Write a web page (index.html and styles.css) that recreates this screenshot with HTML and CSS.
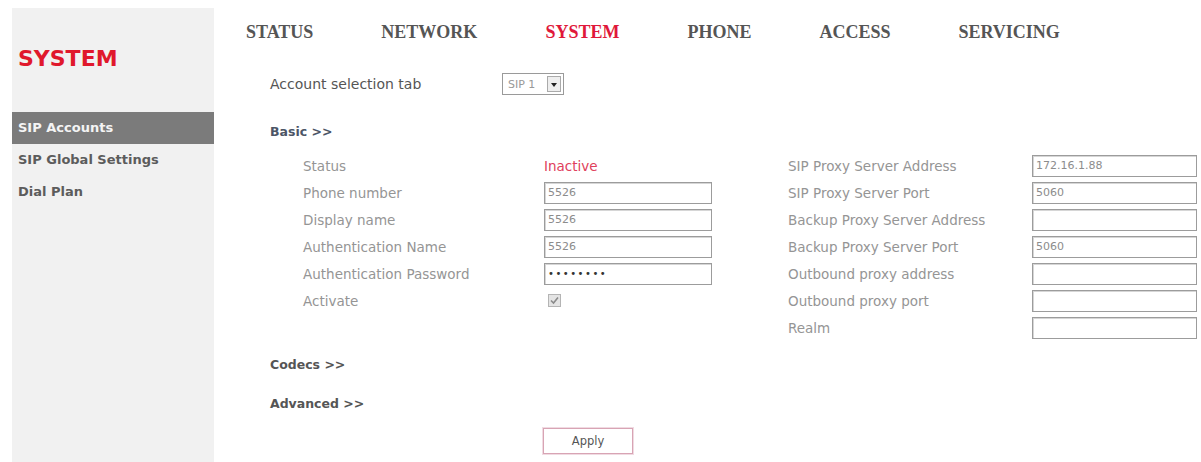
FILE: index.html
```html
<!DOCTYPE html>
<html lang="en">
<head>
	<meta charset="UTF-8">
	<meta name="viewport" content="width=device-width, initial-scale=1.0">
	<title>SIP Accounts</title>
	<link rel="stylesheet" href="styles.css">
</head>
<body>
	<div class="page">
		<div class="sidebar">
			<h1 class="brand">SYSTEM</h1>
			<ul class="side-menu">
				<li class="side-item selected"><a href="#" class="side-link">SIP Accounts</a></li>
				<li class="side-item"><a href="#" class="side-link">SIP Global Settings</a></li>
				<li class="side-item"><a href="#" class="side-link">Dial Plan</a></li>
			</ul>
		</div>

		<div class="main">
			<ul class="top-menu">
				<li class="top-item"><a href="#" class="top-link">STATUS</a></li>
				<li class="top-item"><a href="#" class="top-link">NETWORK</a></li>
				<li class="top-item selected"><a href="#" class="top-link">SYSTEM</a></li>
				<li class="top-item"><a href="#" class="top-link">PHONE</a></li>
				<li class="top-item"><a href="#" class="top-link">ACCESS</a></li>
				<li class="top-item"><a href="#" class="top-link">SERVICING</a></li>
			</ul>

			<div class="content">
				<div class="account-row">
					<span class="account-label">Account selection tab</span>
					<span class="fake-select">
						<span class="select-value">SIP 1</span>
						<span class="select-btn"></span>
					</span>
				</div>

				<a href="#" class="section-link link-basic">Basic &gt;&gt;</a>

				<div class="basic">
					<div class="form-col left">
						<span class="label">Status</span>
						<span class="state">Inactive</span>
						<span class="label">Phone number</span>
						<span class="field">5526</span>
						<span class="label">Display name</span>
						<span class="field">5526</span>
						<span class="label">Authentication Name</span>
						<span class="field">5526</span>
						<span class="label">Authentication Password</span>
						<span class="field password">&bull;&bull;&bull;&bull;&bull;&bull;&bull;&bull;</span>
						<span class="label">Activate</span>
						<span class="check">
							<svg width="13" height="13" viewBox="0 0 13 13">
								<rect x="0.5" y="0.5" width="12" height="12" fill="#e4e4e4" stroke="#b4b4b4"/>
								<path d="M3 6.5 L5.5 9 L10 3.5" fill="none" stroke="#8a8a8a" stroke-width="1.6"/>
							</svg>
						</span>
					</div>
					<div class="form-col right">
						<span class="label">SIP Proxy Server Address</span>
						<span class="field">172.16.1.88</span>
						<span class="label">SIP Proxy Server Port</span>
						<span class="field">5060</span>
						<span class="label">Backup Proxy Server Address</span>
						<span class="field"></span>
						<span class="label">Backup Proxy Server Port</span>
						<span class="field">5060</span>
						<span class="label">Outbound proxy address</span>
						<span class="field"></span>
						<span class="label">Outbound proxy port</span>
						<span class="field"></span>
						<span class="label">Realm</span>
						<span class="field"></span>
					</div>
				</div>

				<a href="#" class="section-link link-codecs">Codecs &gt;&gt;</a>
				<a href="#" class="section-link link-advanced">Advanced &gt;&gt;</a>

				<button class="btn-apply">Apply</button>
			</div>
		</div>
	</div>
</body>
</html>
```

FILE: styles.css
```css
body{ margin: 0; background: #fff; font-family: "DejaVu Sans", Verdana, sans-serif; }
ul{ list-style: none; margin: 0; padding: 0; }
a{ text-decoration: none; }

.page{ display: flex; padding: 8px 0 0 12px; height: 454px; }

.sidebar{ width: 202px; flex: none; background: #f1f1f1; }
.brand{
	margin: 0; height: 104px; box-sizing: border-box; padding: 38px 0 0 6px;
	font-size: 22px; line-height: 26px; color: #e0182c; font-weight: bold;
}
.side-item{ height: 32px; line-height: 32px; }
.side-link{ display: block; padding-left: 6px; font-size: 13px; font-weight: bold; color: #5c5c5c; }
.side-item.selected{ background: #7b7b7b; }
.side-item.selected .side-link{ color: #f4f4f4; }

.main{ padding-left: 32px; flex: 1; }

.top-menu{ display: flex; gap: 68px; padding-top: 12px; height: 24px; }
.top-link{
	font-family: "Liberation Serif", "Times New Roman", serif; font-weight: bold;
	font-size: 18px; line-height: 24px; color: #555;
}
.top-item.selected .top-link{ color: #e0183a; }

.content{ padding-left: 24px; }

.account-row{ display: flex; align-items: center; margin-top: 29px; height: 22px; }
.account-label{ width: 232px; font-size: 14px; color: #555; }
.fake-select{
	display: flex; align-items: center; width: 62px; height: 22px; box-sizing: border-box;
	border: 1px solid #9a9a9a; background: #fff; padding: 2px;
}
.select-value{ flex: 1; font-size: 11px; color: #999; padding-left: 3px; }
.select-btn{
	width: 14px; height: 16px; box-sizing: border-box; border: 1px solid #aaa;
	background: #eee; position: relative;
}
.select-btn::after{
	content: ''; position: absolute; left: 3px; top: 6px;
	border-left: 3px solid transparent; border-right: 3px solid transparent; border-top: 4px solid #222;
}

.section-link{ display: block; width: max-content; font-size: 12.5px; font-weight: bold; line-height: 16px; color: #555; }
.link-basic{ margin-top: 29px; color: #4c5566; }
.link-codecs{ margin-top: 16px; }
.link-advanced{ margin-top: 23px; }

.basic{ display: flex; gap: 76px; margin: 12px 0 0 33px; }
.form-col{ display: grid; grid-auto-rows: 27px; align-items: center; }
.form-col.left{ grid-template-columns: 241px 168px; align-self: flex-start; }
.form-col.right{ grid-template-columns: 244px 165px; }

.label{ font-size: 13.5px; color: #959595; }
.state{ font-size: 13.5px; color: #e0405c; }
.field{
	display: block; height: 22px; box-sizing: border-box; border: 1px solid #9c9c9c;
	box-shadow: inset 1px 1px 0 #d6d6d6; padding-left: 3px;
	font-size: 11px; line-height: 20px; color: #8c8c8c; background: #fff;
}
.field.password{ color: #333; font-size: 10px; letter-spacing: 1.5px; }
.check{ display: block; height: 13px; padding-left: 4px; }
.check svg{ display: block; }

.btn-apply{
	display: block; margin: 16px 0 0 273px; width: 90px; height: 26px;
	background: #fff; border: 1px solid #d8a4b4; box-shadow: 0 0 0 1px #f0dbe2;
	font-family: "DejaVu Sans", Verdana, sans-serif; font-size: 11.5px; color: #555;
}
```
